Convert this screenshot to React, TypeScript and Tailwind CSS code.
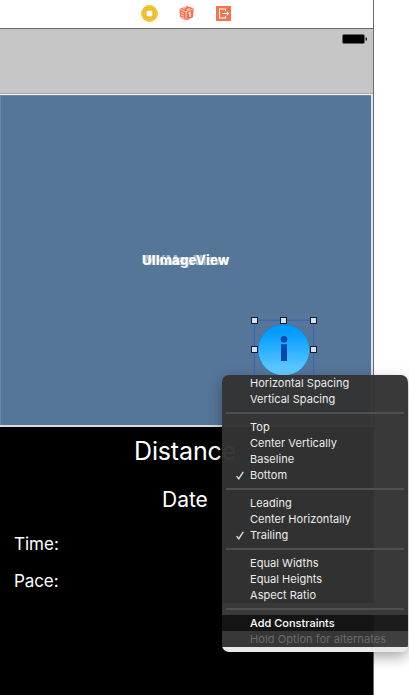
import React from "react";

type Item = { label: string; checked?: boolean };

const groups: Item[][] = [
  [
    { label: "Horizontal Spacing" },
    { label: "Vertical Spacing" },
  ],
  [
    { label: "Top" },
    { label: "Center Vertically" },
    { label: "Baseline" },
    { label: "Bottom", checked: true },
  ],
  [
    { label: "Leading" },
    { label: "Center Horizontally" },
    { label: "Trailing", checked: true },
  ],
  [
    { label: "Equal Widths" },
    { label: "Equal Heights" },
    { label: "Aspect Ratio" },
  ],
];

function Separator() {
  return (
    <div className="flex h-3 items-start px-1 pt-[5px]">
      <div className="h-0.5 w-full bg-[#505050]" />
    </div>
  );
}

function MenuRow({ label, checked }: Item) {
  return (
    <div className="flex h-4 items-center text-[#ececec]">
      <span className="flex w-7 justify-end pr-[6px]">
        {checked && (
          <svg width="8" height="9" viewBox="0 0 8 9" fill="none" stroke="#e6e6e6" strokeWidth="1.3">
            <path d="M0.6 5.2 L2.7 7.8 L7.3 0.8" />
          </svg>
        )}
      </span>
      <span className="whitespace-nowrap">{label}</span>
    </div>
  );
}

function ContextMenu() {
  return (
    <div className="absolute left-[222px] top-[375px] h-[277px] w-[186px] overflow-hidden rounded-[7px] font-['Inter',sans-serif] text-[11px] font-normal leading-4 tracking-[0.04px] shadow-[0_5px_14px_rgba(0,0,0,0.35)]">
      <div className="h-[228px] bg-[#333333]/97">
        {groups.map((group, i) => (
          <React.Fragment key={i}>
            {i > 0 && <Separator />}
            {group.map((item) => (
              <MenuRow key={item.label} {...item} />
            ))}
          </React.Fragment>
        ))}
      </div>
      <div className="bg-[#393939]">
        <Separator />
      </div>
      <div className="h-4 bg-[#151515]/97 pl-7 font-medium tracking-[0px] text-white">Add Constraints</div>
      <div className="h-4 bg-[#393939]/97 pl-7 tracking-[0.08px] text-[#6b6b6b]">Hold Option for alternates</div>
      <div className="h-[5px] bg-[#e9e9e9]" />
    </div>
  );
}

function Toolbar() {
  return (
    <div className="flex h-7 items-center bg-white pb-[2px] pl-[141px]">
      <svg width="17" height="17" viewBox="0 0 17 17">
        <circle cx="8.5" cy="8.5" r="7.9" fill="#f9c935" stroke="#f2bb2e" />
        <circle cx="8.5" cy="8.5" r="6.2" fill="none" stroke="#eab022" strokeWidth="0.7" />
        <rect x="4.5" y="4.5" width="8" height="8" fill="#e3a91e" />
        <rect x="5.5" y="5.5" width="6" height="6" fill="#fff3c8" />
        <rect x="6" y="6" width="5" height="5" fill="#fffefa" />
      </svg>
      <svg className="ml-5" width="17" height="17" viewBox="0 0 17 17">
        <path d="M1.3 4 L9 1 L15.8 3.2 L15 12.2 L8 15.6 L2.3 12.4Z" fill="#f37350" />
        <path d="M1.3 4.4 L8 6.7 L15.8 3.6 M8 6.7 V15.4" stroke="#ffe3da" strokeWidth="0.8" fill="none" />
        <path d="M4.8 3.6 L8.3 2.4 M8.4 4.9 L12 3.5 M3 7.6 L6 8.5 M3.2 10 L6 10.9 M3.6 12.1 L6.2 13.2" stroke="#ffd9cd" strokeWidth="1" fill="none" />
        <path d="M10.6 8.4 L12 7.5 V12" stroke="#fff" strokeWidth="1.2" fill="none" />
      </svg>
      <svg className="ml-[21px]" width="15" height="15" viewBox="0 0 15 15">
        <rect width="15" height="15" fill="#f4754c" />
        <path d="M9.5 5 V3 H3.5 V12 H9.5 V10 M6.5 7.5 H12" stroke="#fff" strokeWidth="1.1" fill="none" />
        <path d="M10.8 5.2 L13.3 7.5 L10.8 9.8Z" fill="#fff" />
      </svg>
    </div>
  );
}

const handles = [
  "left-[-4px] top-[-4px]",
  "left-[25px] top-[-4px]",
  "left-[55px] top-[-4px]",
  "left-[-4px] top-[25px]",
  "left-[55px] top-[25px]",
];

function InfoButton() {
  return (
    <div className="absolute left-[254px] top-[320px] h-[60px] w-[60px] border border-[#3b66ba] shadow-[0_0_0_1px_rgba(59,102,186,0.4)]">
      <svg className="absolute left-[2px] top-[2px]" width="54" height="54" viewBox="0 0 54 54">
        <defs>
          <linearGradient id="info" x1="0" y1="0" x2="0" y2="1">
            <stop offset="0" stopColor="#0098ff" />
            <stop offset="0.25" stopColor="#0ca1ff" />
            <stop offset="1" stopColor="#6ed0ff" />
          </linearGradient>
        </defs>
        <circle cx="26.8" cy="27" r="25.8" fill="url(#info)" stroke="#237bcb" strokeWidth="0.7" />
        <circle cx="27" cy="16.2" r="3.3" fill="#0548ac" />
        <path d="M24 21.2 H30 V38 H24Z" fill="#0548ac" />
      </svg>
      {handles.map((place) => (
        <span key={place} className={`absolute h-[7px] w-[7px] border border-[#141e2b] bg-[#d5dfed] ${place}`} />
      ))}
    </div>
  );
}

export default function App() {
  return (
    <div className="relative h-[695px] w-[409px] overflow-hidden bg-white font-['Inter',sans-serif]">
      <div className="flex h-full w-[374px] flex-col border-r border-[#6c6a6b]">
        <Toolbar />
        <div className="flex h-[66px] shrink-0 justify-end border-b border-t border-b-[#a9a9a9] border-t-[#686868] bg-[#c6c6c6] pr-[5px] pt-[5px]">
          <svg width="26" height="11" viewBox="0 0 26 11">
            <rect x="0.5" y="0.5" width="22" height="9" rx="1.5" fill="#000" stroke="#606060" />
            <path d="M23.5 3.5 H25 V6.5 H23.5Z" fill="#222" />
          </svg>
        </div>
        <div className="flex h-[333px] shrink-0 border-b-2 border-r-2 border-t border-b-[#d8dbdf] border-r-[#dfe4ea] border-t-[#f4f5f6] bg-[#557699]">
          <div className="relative w-full border-l border-t border-[#6b88a8]">
            <span className="absolute left-[143px] top-[156px] text-[13px] font-bold leading-4 tracking-[0.1px] text-white/50">MKMapView</span>
            <span className="absolute left-[141px] top-[156px] text-[13px] font-extrabold leading-4 tracking-[0.27px] text-white">UIImageView</span>
          </div>
        </div>
        <div className="flex flex-1 flex-col bg-black text-white">
          <div className="mt-[8px] h-8 pl-[134px] text-[25px] leading-8 tracking-[-0.15px]">Distance</div>
          <div className="mt-[19px] h-7 pl-[162px] text-[21px] leading-7">Date</div>
          <div className="mt-[18px] h-6 pl-[14px] text-[17px] leading-6">Time:</div>
          <div className="mt-[13px] h-6 pl-[14px] text-[17px] leading-6 tracking-[-0.1px]">Pace:</div>
        </div>
      </div>
      <InfoButton />
      <ContextMenu />
    </div>
  );
}
